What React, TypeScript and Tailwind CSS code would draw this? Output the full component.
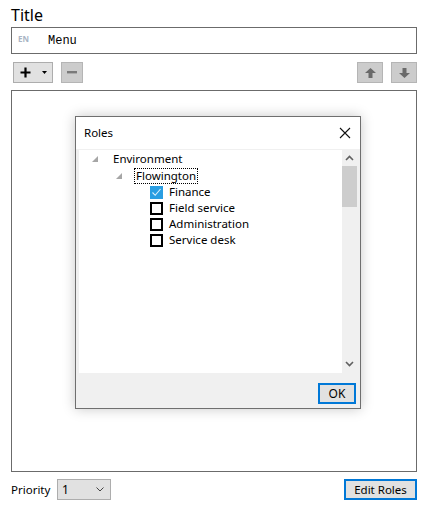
import React from 'react';

const font = { fontFamily: '"Noto Sans", "Open Sans", sans-serif' };

const Expander = () => (
    <svg width="6" height="6" viewBox="0 0 6 6" className="shrink-0">
        <polygon points="6,0 6,6 0,6" fill="#a6a6a6" />
    </svg>
);

const Check = ({ checked }: { checked?: boolean }) =>
    checked ? (
        <span className="w-[13px] h-[13px] bg-[#2a9ee2] flex items-center justify-center shrink-0">
            <svg width="11" height="11" viewBox="0 0 11 11">
                <path d="M1.5 5.5 L4.2 8.3 L9.5 2" stroke="#dff1fb" strokeWidth="1.1" fill="none" />
            </svg>
        </span>
    ) : (
        <span className="w-[13px] h-[13px] border-2 border-black bg-white shrink-0" />
    );

const RolesDialog = () => {
    const roles = [
        { name: 'Finance', checked: true },
        { name: 'Field service' },
        { name: 'Administration' },
        { name: 'Service desk' },
    ];

    return (
        <div className="absolute left-[63px] top-[25px] w-[286px] h-[293px] bg-[#f0f0f0] border border-[#6f6f6f] shadow-[0_0_12px_rgba(0,0,0,0.22)] flex flex-col">
            {/* Title bar */}
            <div className="h-[32px] bg-white flex items-center justify-between pl-[8px] pr-[9px] text-[11.5px] text-black">
                <span>Roles</span>
                <svg width="12" height="12" viewBox="0 0 12 12">
                    <path d="M1 1 L11 11 M11 1 L1 11" stroke="#111" strokeWidth="1.1" />
                </svg>
            </div>

            {/* Tree + scrollbar */}
            <div className="mt-[1px] ml-[3px] mr-[3px] flex h-[223px]">
                <div className="flex-1 bg-white pt-[1px] text-[11.5px] text-black leading-[16px]">
                    <div className="flex items-center h-[16px] pl-[13px]">
                        <Expander />
                        <span className="ml-[15px]">Environment</span>
                    </div>
                    <div className="flex items-center h-[17px] pl-[37px]">
                        <Expander />
                        <span className="ml-[12px] px-[1px] border border-dotted border-black leading-[14px]">Flowington</span>
                    </div>
                    {roles.map((r) => (
                        <div key={r.name} className="flex items-center h-[16px] pl-[71px]">
                            <Check checked={r.checked} />
                            <span className="ml-[6px]">{r.name}</span>
                        </div>
                    ))}
                </div>
                <div className="w-[15px] flex flex-col items-center">
                    <div className="h-[16px] flex items-center justify-center">
                        <svg width="9" height="6" viewBox="0 0 9 6">
                            <path d="M1 5 L4.5 1.5 L8 5" stroke="#606060" strokeWidth="1.6" fill="none" />
                        </svg>
                    </div>
                    <div className="w-[15px] h-[41px] bg-[#cdcdcd]" />
                    <div className="flex-1" />
                    <div className="h-[18px] flex items-center justify-center">
                        <svg width="9" height="6" viewBox="0 0 9 6">
                            <path d="M1 1 L4.5 4.5 L8 1" stroke="#606060" strokeWidth="1.6" fill="none" />
                        </svg>
                    </div>
                </div>
            </div>

            {/* Footer */}
            <div className="flex justify-end pr-[4px] pt-[10px]">
                <button className="w-[38px] h-[21px] border-2 border-[#0078d7] bg-[#e1e1e1] text-[12px] text-black leading-none">
                    OK
                </button>
            </div>
        </div>
    );
};

const App = () => {
    return (
        <div className="w-[430px] h-[509px] bg-white pl-[11px] pt-[4px]" style={font}>
            {/* Title */}
            <div className="text-[16px] leading-[22px] text-black">Title</div>

            {/* Text field */}
            <div className="mt-[1px] w-[406px] h-[27px] border border-[#6b6b6b] flex items-center">
                <span className="ml-[6px] text-[8px] font-bold text-[#a9b4c4] leading-none -mt-[4px]">EN</span>
                <span className="ml-[19px] text-[12px] text-black" style={{ fontFamily: '"Liberation Mono", monospace' }}>
                    Menu
                </span>
            </div>

            {/* Toolbar */}
            <div className="mt-[8px] w-[406px] flex items-center">
                <button className="ml-[2px] w-[40px] h-[21px] bg-[#e1e1e1] border border-[#adadad] flex items-center">
                    <svg width="11" height="11" viewBox="0 0 11 11" className="ml-[6px]">
                        <path d="M5.5 0.5 V10.5 M0.5 5.5 H10.5" stroke="#000" strokeWidth="2.2" />
                    </svg>
                    <svg width="5" height="3" viewBox="0 0 5 3" className="ml-[11px]">
                        <polygon points="0,0 5,0 2.5,3" fill="#000" />
                    </svg>
                </button>
                <button className="ml-[8px] w-[22px] h-[21px] bg-[#cccccc] border border-[#b5b5b5] flex items-center justify-center">
                    <svg width="10" height="3" viewBox="0 0 10 3">
                        <rect width="10" height="2.4" fill="#7a7a7a" />
                    </svg>
                </button>
                <div className="flex-1" />
                <button className="w-[26px] h-[21px] bg-[#cccccc] border border-[#b5b5b5] flex items-center justify-center">
                    <svg width="11" height="10" viewBox="0 0 11 10">
                        <polygon points="5.5,0 11,5 7.5,5 7.5,10 3.5,10 3.5,5 0,5" fill="#6a6a6a" />
                    </svg>
                </button>
                <button className="ml-[8px] w-[26px] h-[21px] bg-[#cccccc] border border-[#b5b5b5] flex items-center justify-center">
                    <svg width="11" height="10" viewBox="0 0 11 10">
                        <polygon points="5.5,10 11,5 7.5,5 7.5,0 3.5,0 3.5,5 0,5" fill="#6a6a6a" />
                    </svg>
                </button>
            </div>

            {/* Main area with dialog */}
            <div className="relative mt-[7px] w-[406px] h-[382px] border border-[#6b6b6b]">
                <RolesDialog />
            </div>

            {/* Bottom row */}
            <div className="mt-[7px] w-[406px] flex items-center">
                <span className="w-[46px] text-[11.5px] text-black">Priority</span>
                <div className="w-[54px] h-[21px] bg-[#e1e1e1] border border-[#adadad] flex items-center justify-between pl-[4px] pr-[6px] text-[12px] text-black">
                    <span>1</span>
                    <svg width="8" height="5" viewBox="0 0 8 5">
                        <path d="M0.5 0.5 L4 4 L7.5 0.5" stroke="#444" strokeWidth="1" fill="none" />
                    </svg>
                </div>
                <div className="flex-1" />
                <button className="w-[73px] h-[21px] border-2 border-[#0078d7] bg-[#e1e1e1] text-[11.5px] text-black leading-none">
                    Edit Roles
                </button>
            </div>
        </div>
    );
};

export default App;
